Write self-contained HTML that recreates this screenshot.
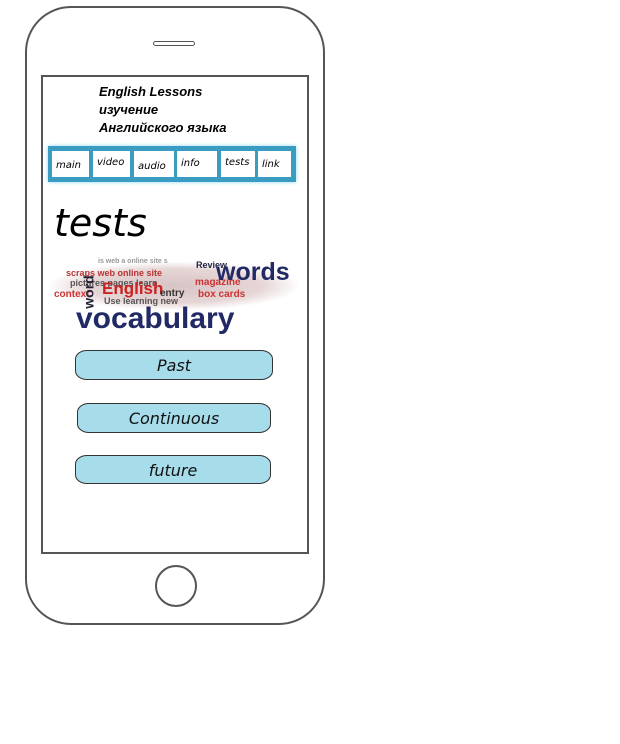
<!DOCTYPE html>
<html><head><meta charset="utf-8"><style>
body{margin:0;width:620px;height:744px;background:#fff;position:relative;overflow:hidden;font-family:"Liberation Sans","DejaVu Sans",sans-serif}
.a{position:absolute}
.phone{left:25px;top:6px;width:296px;height:615px;border:2px solid #555;border-radius:46px}
.spk{left:153px;top:41px;width:40px;height:3px;border:1.5px solid #555;border-radius:3px}
.scr{left:41px;top:75px;width:264px;height:475px;border:2px solid #555}
.home{left:155px;top:565px;width:38px;height:38px;border:2px solid #555;border-radius:50%}
.hdr{left:99px;top:83px;font:italic bold 13px/18px "Liberation Sans",sans-serif;color:#000}
.nav{left:48px;top:146px;width:248px;height:36px;background:#3a9cc0;box-shadow:0 0 4px #8fd8ee}
.nb{position:absolute;top:5px;height:26px;background:#fff;font:italic 10px/30px "DejaVu Sans",sans-serif;padding-left:4px;box-sizing:border-box}
.btn{position:absolute;background:#a7dceb;border:1.5px solid #333;border-radius:12px/9px;text-align:center;font:italic 16px/29px "DejaVu Sans",sans-serif;color:#111}
.w{position:absolute;font-weight:bold;white-space:nowrap;font-family:"Liberation Sans",sans-serif}
</style></head><body>
<div class="a phone"></div>
<div class="a spk"></div>
<div class="a scr"></div>
<div class="a home"></div>
<div class="a hdr">English Lessons<br>изучение<br>Английского языка</div>
<div class="a nav">
<div class="nb" style="left:4px;width:37px">main</div>
<div class="nb" style="left:45px;width:37px;line-height:24px">video</div>
<div class="nb" style="left:86px;width:40px;line-height:32px">audio</div>
<div class="nb" style="left:129px;width:40px;line-height:26px">info</div>
<div class="nb" style="left:173px;width:34px;line-height:24px">tests</div>
<div class="nb" style="left:210px;width:33px;line-height:28px">link</div>
</div>
<div class="a" style="left:54px;top:198px;font:italic 38px/50px 'DejaVu Sans',sans-serif;color:#000">tests</div>
<div class="a" style="left:48px;top:250px;width:252px;height:85px">
<div class="w" style="left:2px;top:12px;width:248px;height:48px;background:radial-gradient(ellipse at center,#d8c4c4 0%,#e6d6d6 50%,rgba(255,255,255,0) 72%)"></div>
<div class="w" style="left:50px;top:8px;font-size:7px;color:#999">is  web  a  online  site  s</div>
<div class="w" style="left:18px;top:18px;font-size:9px;color:#b33">scraps web online site</div>
<div class="w" style="left:22px;top:28px;font-size:9px;color:#555">pictures pages learn</div>
<div class="w" style="left:6px;top:39px;font-size:10px;color:#c33">context</div>
<div class="w" style="left:24px;top:34px;font-size:14px;color:#223;transform:rotate(-90deg)">word</div>
<div class="w" style="left:54px;top:29px;font-size:17px;color:#c22">English</div>
<div class="w" style="left:56px;top:46px;font-size:9px;color:#555">Use learning new</div>
<div class="w" style="left:148px;top:10px;font-size:9px;color:#224">Review</div>
<div class="w" style="left:147px;top:27px;font-size:10px;color:#c33">magazine</div>
<div class="w" style="left:150px;top:39px;font-size:10px;color:#c33">box cards</div>
<div class="w" style="left:112px;top:38px;font-size:10px;color:#333">entry</div>
<div class="w" style="left:168px;top:8px;font-size:25px;color:#222a66">words</div>
<div class="w" style="left:28px;top:52px;font-size:30px;color:#222a66">vocabulary</div>
</div>
<div class="btn" style="left:75px;top:350px;width:196px;height:28px">Past</div>
<div class="btn" style="left:77px;top:403px;width:192px;height:28px">Continuous</div>
<div class="btn" style="left:75px;top:455px;width:194px;height:27px">future</div>
</body></html>
